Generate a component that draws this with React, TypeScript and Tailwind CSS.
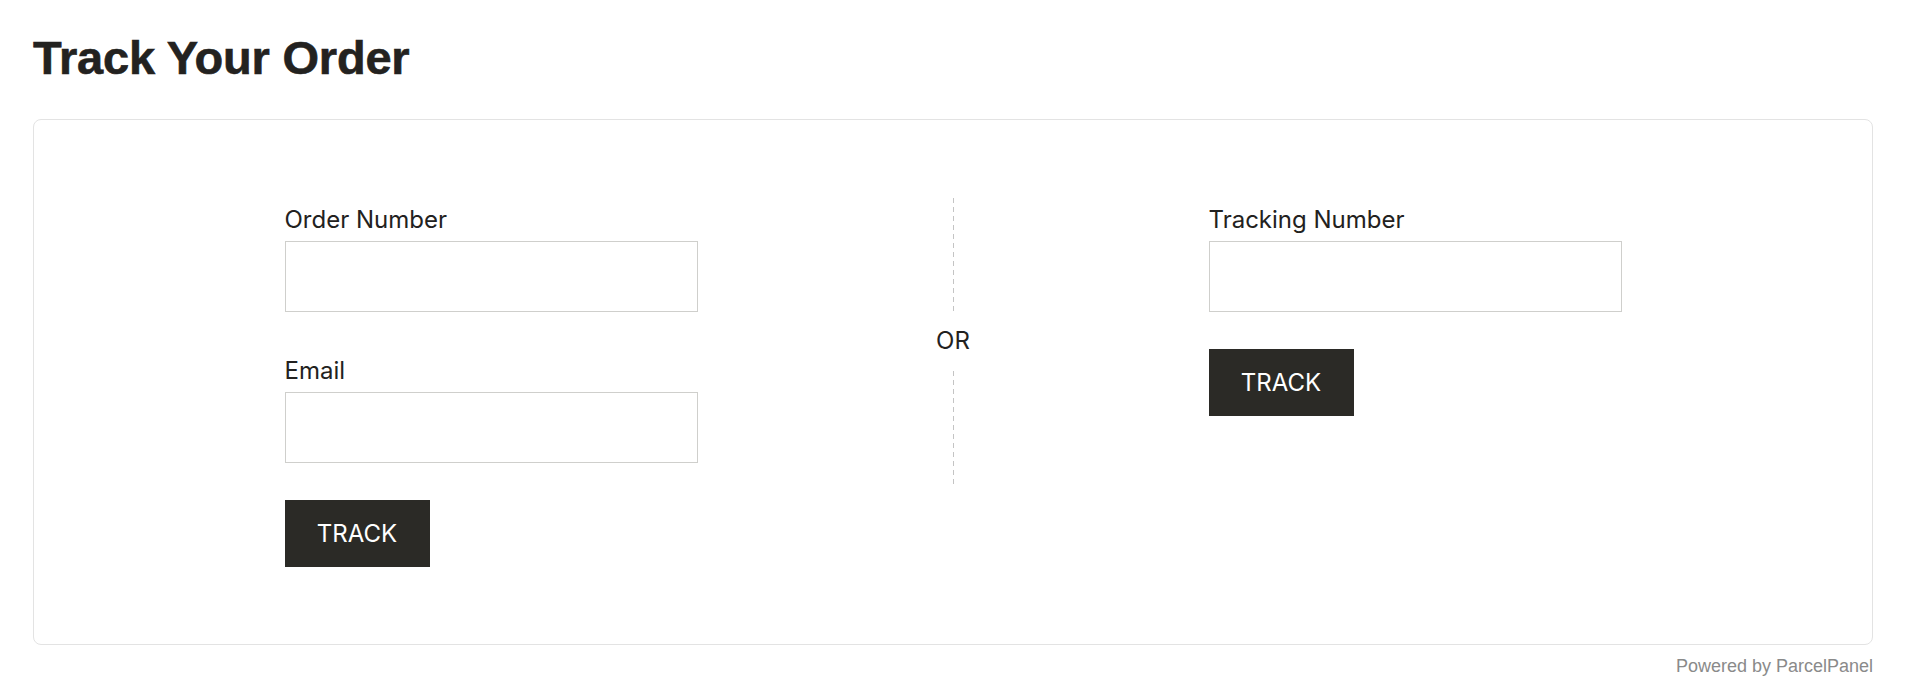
import React from 'react';

const labelCls = "block text-[24px] leading-[30px] text-[#222120] mb-[6px] font-['Inter',sans-serif]";
const inputCls = 'block w-[413px] h-[71px] border border-[#cfcfcc] bg-white px-3 outline-none';
const buttonCls =
  "w-[145px] h-[67px] bg-[#2b2a26] text-white text-[24px] font-['Inter',sans-serif] uppercase";
const dashCls =
  'h-[113px] w-px bg-[repeating-linear-gradient(to_bottom,#c4c4c4_0px,#c4c4c4_5px,transparent_5px,transparent_9px)]';

export default function App() {
  return (
    <div className="min-h-[693px] bg-white pl-[33px] pr-[47px] pt-[30px]">
      <h1 className="text-[47px] leading-[56px] font-bold tracking-[-0.2px] text-[#232220] font-['Liberation_Sans',Arial,sans-serif] [-webkit-text-stroke:0.6px_#232220]">
        Track Your Order
      </h1>

      <div className="mt-[33px] h-[526px] rounded-lg border border-[#e3e3e3] pt-[78px]">
        <div className="flex items-start justify-center">
          {/* Order number + email */}
          <div className="w-[413px] pt-[7px]">
            <label htmlFor="order" className={labelCls}>
              Order Number
            </label>
            <input id="order" type="text" className={inputCls} />

            <label htmlFor="email" className={`${labelCls} mt-[44px]`}>
              Email
            </label>
            <input id="email" type="email" className={inputCls} />

            <button type="button" className={`${buttonCls} mt-[37px]`}>
              TRACK
            </button>
          </div>

          {/* Divider */}
          <div className="mx-[255px] flex w-px flex-col items-center">
            <div className={dashCls} />
            <span className="my-[15px] text-[24px] leading-[30px] text-[#222120] font-['Inter',sans-serif]">
              OR
            </span>
            <div className={dashCls} />
          </div>

          {/* Tracking number */}
          <div className="w-[413px] pt-[7px]">
            <label htmlFor="tracking" className={labelCls}>
              Tracking Number
            </label>
            <input id="tracking" type="text" className={inputCls} />

            <button type="button" className={`${buttonCls} mt-[37px]`}>
              TRACK
            </button>
          </div>
        </div>
      </div>

      <p className="mt-[9px] text-right text-[18px] leading-[24px] text-[#8a8a8a] font-['Liberation_Sans',Arial,sans-serif]">
        Powered by ParcelPanel
      </p>
    </div>
  );
}
